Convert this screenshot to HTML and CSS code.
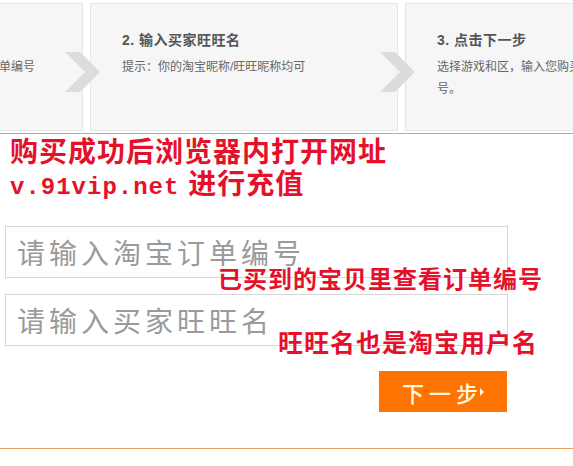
FILE: index.html
```html
<!DOCTYPE html>
<html lang="zh-CN">

<head>
  <meta charset="UTF-8">
  <meta name="viewport" content="width=device-width, initial-scale=1.0">
  <title>淘宝充值</title>
  <link rel="stylesheet" href="styles.css">
</head>

<body>
  <div class="page">
    <!-- 步骤说明 -->
    <div class="steps">
      <div class="step-box">
        <h4>1. 输入淘宝订单编号</h4>
        <p>提示：在我的已买到的宝贝里查看订单编号</p>
        <svg class="step-arrow" width="36" height="40" viewBox="0 0 36 40">
          <polygon points="0,0 15,0 35,20 15,40 0,40 20,20" fill="#dcdcdc" />
        </svg>
      </div>
      <div class="step-box">
        <h4>2. 输入买家旺旺名</h4>
        <p>提示：你的淘宝昵称/旺旺昵称均可</p>
        <svg class="step-arrow" width="36" height="40" viewBox="0 0 36 40">
          <polygon points="0,0 15,0 35,20 15,40 0,40 20,20" fill="#dcdcdc" />
        </svg>
      </div>
      <div class="step-box">
        <h4>3. 点击下一步</h4>
        <p>选择游戏和区，输入您购买的游戏的充值帐号。</p>
      </div>
    </div>

    <div class="main">
      <div class="notice">
        <div>购买成功后浏览器内打开网址</div>
        <div><span class="url">v.91vip.net</span> 进行充值</div>
      </div>

      <div class="form">
        <input class="field" type="text" placeholder="请输入淘宝订单编号">
        <input class="field" type="text" placeholder="请输入买家旺旺名">
        <span class="tip tip-order">已买到的宝贝里查看订单编号</span>
        <span class="tip tip-name">旺旺名也是淘宝用户名</span>
      </div>

      <button class="btn-next">下一步<span class="caret"></span></button>
    </div>
  </div>
</body>

</html>
```

FILE: styles.css
```css
* {
  margin: 0;
  padding: 0;
  box-sizing: border-box;
}

body {
  font-family: "Liberation Sans", "Noto Sans CJK SC", sans-serif;
  background-color: #fff;
  width: 573px;
  height: 466px;
  overflow: hidden;
}

.page {
  width: 573px;
  overflow: hidden;
}

.steps {
  display: flex;
  gap: 7px;
  margin-top: 3px;
  margin-left: -225px;
  padding-bottom: 2px;
  border-bottom: 1px solid #e8a25e;
}

.step-box {
  position: relative;
  flex: 0 0 308px;
  height: 128px;
  background-color: #f6f6f6;
  border: 1px solid #e6e6e6;
  padding: 25px 0 0 31px;
  color: #555;
}

.step-box h4 {
  font-size: 14px;
  font-weight: bold;
  color: #555;
  line-height: 22px;
  letter-spacing: 0.5px;
  margin-bottom: 5px;
}

.step-box p {
  font-size: 12px;
  color: #666;
  line-height: 22px;
  width: 230px;
}

.step-arrow {
  position: absolute;
  right: -19px;
  top: 48px;
  z-index: 2;
}

.main {
  padding-top: 3px;
  height: 315px;
  border-bottom: 1px solid #e8a25e;
}

.notice {
  padding-left: 10px;
  color: #e5112b;
  font-size: 28px;
  font-weight: bold;
  line-height: 32px;
  letter-spacing: 1px;
  white-space: nowrap;
}

.notice .url {
  font-family: "Liberation Mono", monospace;
  font-size: 24px;
  letter-spacing: 1px;
}

.form {
  position: relative;
  display: flex;
  flex-direction: column;
  gap: 16px;
  margin: 22px 0 0 5px;
  width: 503px;
}

.field {
  height: 52px;
  border: 1px solid #d6d6d6;
  padding-left: 11px;
  font-family: "Noto Sans CJK SC", sans-serif;
  font-size: 28px;
  letter-spacing: 4px;
  color: #333;
  outline: none;
}

.field::placeholder {
  color: #9a9a9a;
}

.tip {
  position: absolute;
  color: #e5112b;
  font-weight: bold;
  white-space: nowrap;
}

.tip-order {
  left: 213px;
  top: 34px;
  font-size: 24px;
  letter-spacing: 1px;
}

.tip-name {
  left: 273px;
  top: 97px;
  font-size: 25px;
  letter-spacing: 1px;
}

.btn-next {
  display: flex;
  align-items: center;
  justify-content: center;
  margin: 25px 0 0 379px;
  width: 128px;
  height: 41px;
  border: none;
  background-color: #ff7300;
  color: #fff6de;
  font-family: "Noto Sans CJK SC", sans-serif;
  font-size: 22px;
  font-weight: 500;
  letter-spacing: 5px;
  cursor: pointer;
}

.caret {
  display: inline-block;
  width: 0;
  height: 0;
  border-left: 4px solid #fff6de;
  border-top: 4px solid transparent;
  border-bottom: 4px solid transparent;
  margin-left: -3px;
}
```
